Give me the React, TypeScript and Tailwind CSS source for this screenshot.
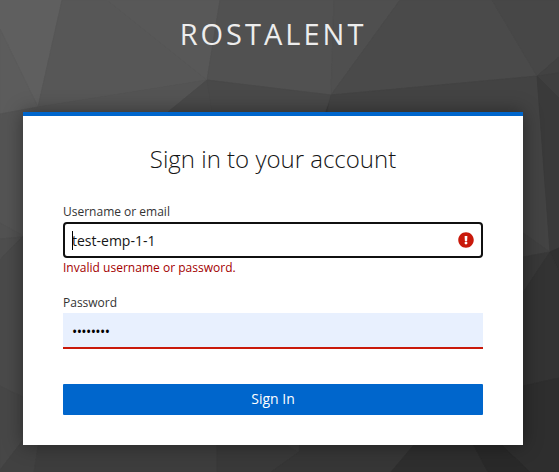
import { useState } from "react";
import { FaExclamationCircle } from "react-icons/fa";

const facets = [
  { points: "0,0 62,0 38,107 0,29", fill: "#5f5f5f" },
  { points: "0,29 38,107 0,114", fill: "#5c5c5c" },
  { points: "62,0 107,0 207,80 38,107", fill: "#575757" },
  { points: "107,0 220,0 207,80", fill: "#585858" },
  { points: "220,0 334,0 331,95 207,80", fill: "#515151" },
  { points: "334,0 400,0 331,95", fill: "#4f4f4f" },
  { points: "400,0 492,0 537,76 331,95", fill: "#4a4a4a" },
  { points: "492,0 559,0 559,57 537,76", fill: "#474747" },
  { points: "537,76 559,57 559,73", fill: "#424242" },
  { points: "0,114 38,107 207,80 168,112 100,180 22,237 0,223", fill: "#545454" },
  { points: "207,80 212,112 220,250 22,237 168,112", fill: "#4a4a4a" },
  { points: "207,80 331,95 325,112 300,250 220,250 212,112", fill: "#494949" },
  { points: "331,95 537,76 550,252 523,233 300,250", fill: "#434343" },
  { points: "537,76 559,73 559,98", fill: "#3f3f3f" },
  { points: "537,76 559,98 559,248 550,252", fill: "#3a3a3a" },
  { points: "523,233 550,252 523,257", fill: "#404040" },
  { points: "523,257 550,252 523,293 400,300", fill: "#383838" },
  { points: "550,252 559,248 559,272", fill: "#313131" },
  { points: "550,252 559,272 559,378 500,391 500,327", fill: "#333333" },
  { points: "559,378 559,472 530,472 501,445 500,391", fill: "#2e2e2e" },
  { points: "0,223 22,235 22,237 0,239", fill: "#525252" },
  { points: "0,239 22,237 0,260", fill: "#4e4e4e" },
  { points: "0,260 22,237 60,237 60,415 0,386", fill: "#4a4a4a" },
  { points: "0,386 60,415 23,440 0,470", fill: "#474747" },
  { points: "0,470 23,440 39,445 34,472 0,472", fill: "#414141" },
  { points: "39,440 217,440 217,472 34,472", fill: "#3d3d3d" },
  { points: "217,440 279,440 299,452 271,472 217,472", fill: "#393939" },
  { points: "279,440 300,440 299,452", fill: "#3c3c3c" },
  { points: "300,440 418,440 391,472 271,472 299,452", fill: "#363636" },
  { points: "418,440 471,440 488,472 391,472", fill: "#2e2e2e" },
  { points: "471,440 496,440 530,472 488,472", fill: "#292929" },
];

// the stroke closes the hairline seams between neighbouring facets
const Background = () => (
  <svg
    className="absolute inset-0 -z-10 h-full w-full"
    viewBox="0 0 559 472"
    preserveAspectRatio="none"
    aria-hidden="true"
  >
    {facets.map((facet) => (
      <polygon
        key={facet.points}
        points={facet.points}
        fill={facet.fill}
        stroke={facet.fill}
        strokeWidth={0.8}
        strokeLinejoin="round"
      />
    ))}
  </svg>
);

const App = () => {
  const [values, setValues] = useState({
    username: "test-emp-1-1",
    password: "password",
  });

  const handleChange = (e: React.ChangeEvent<HTMLInputElement>) => {
    setValues({ ...values, [e.target.name]: e.target.value });
  };

  const handleSubmit = (e: React.FormEvent) => {
    e.preventDefault();
  };

  return (
    <div className="relative isolate h-[472px] overflow-hidden bg-[#3c3c3c] font-['Open_Sans',sans-serif] text-[#151515]">
      <Background />
      <header className="flex h-28 w-[543px] justify-center pt-[14px]">
        <h1 className="pl-[3px] text-[29px] leading-10 tracking-[3px] text-[#ededed]">
          ROSTALENT
        </h1>
      </header>

      <main className="ml-[23px] h-[333px] w-[500px] border-t-4 border-[#0066cc] bg-white px-10 shadow-[0_0_18px_rgba(0,0,0,0.4)]">
        <h2 className="pt-[25px] text-center text-2xl leading-9 font-light">
          Sign in to your account
        </h2>

        <form onSubmit={handleSubmit} className="pt-[25px]">
          <label htmlFor="username" className="block pb-px text-xs leading-[19px] text-[#333]">
            Username or email
          </label>
          <div className="relative flex h-9 items-center rounded-[4px] border-2 border-[#101010] bg-white">
            <input
              id="username"
              name="username"
              type="text"
              value={values.username}
              onChange={handleChange}
              className="h-full w-full pl-[7px] text-sm outline-none"
            />
            <span className="absolute top-[7px] left-[7px] h-[19px] w-px bg-black" />
            <FaExclamationCircle className="absolute right-[7px] h-4 w-4 text-[#c9190b]" />
          </div>
          <p className="text-xs leading-5 tracking-[0.02px] text-[#a30000]">
            Invalid username or password.
          </p>

          <label
            htmlFor="password"
            className="mt-[15px] block text-xs leading-5 text-[#333]"
          >
            Password
          </label>
          <input
            id="password"
            name="password"
            type="password"
            value={values.password}
            onChange={handleChange}
            className="block h-9 w-full border-b-2 border-[#c9190b] bg-[#e8f0fe] px-[9px] pt-[3px] text-sm tracking-[-0.6px] text-black outline-none"
          />

          <button
            type="submit"
            className="mt-[35px] block h-[31px] w-full rounded-[1px] bg-[#0066cc] pb-0.5 text-sm leading-[29px] text-white"
          >
            Sign In
          </button>
        </form>
      </main>
    </div>
  );
};

export default App;
